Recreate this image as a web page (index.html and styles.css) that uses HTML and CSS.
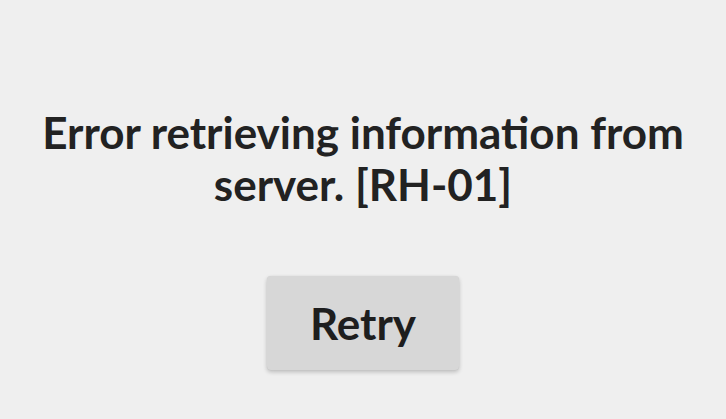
FILE: index.html
```html
<!DOCTYPE html>
<html>
<head>
<meta charset="utf-8">
<link rel="stylesheet" href="styles.css">
</head>
<body>
<main class="screen">
  <p class="message">Error retrieving information from server. [RH-01]</p>
  <button class="retry">Retry</button>
</main>
</body>
</html>
```
FILE: styles.css
```css
html, body {
  margin: 0;
  padding: 0;
  background: #efefef;
}
.screen {
  width: 726px;
  height: 419px;
  display: flex;
  flex-direction: column;
  align-items: center;
  box-sizing: border-box;
  padding-top: 106px;
}
.message {
  margin: 0;
  width: 680px;
  text-align: center;
  font-family: Lato, "Open Sans", sans-serif;
  font-weight: 700;
  font-size: 44px;
  line-height: 52px;
  color: #222222;
}
.retry {
  margin-top: 66px;
  width: 192px;
  height: 94px;
  border: none;
  border-radius: 4px;
  background: #d7d7d7;
  box-shadow: 0 2px 4px rgba(0,0,0,0.22), 0 0 1px rgba(0,0,0,0.1);
  font-family: Lato, "Open Sans", sans-serif;
  font-weight: 700;
  font-size: 44px;
  color: #1e1e1e;
  padding: 0;
}
```
